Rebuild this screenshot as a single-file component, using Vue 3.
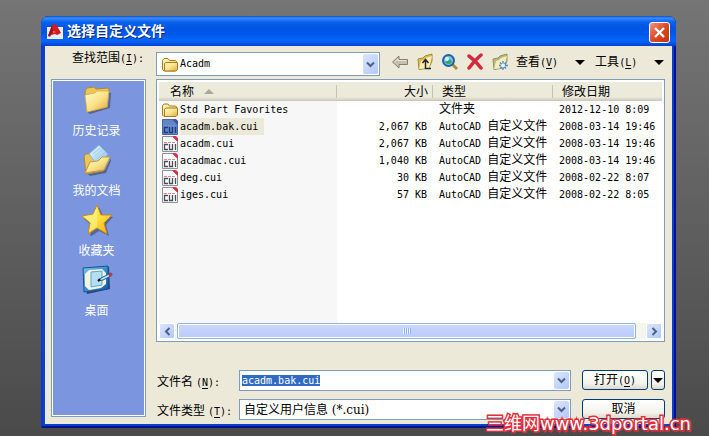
<script setup>
import { onMounted, ref } from 'vue'

const places = [
  { icon: 'history', label: '历史记录' },
  { icon: 'docs', label: '我的文档' },
  { icon: 'star', label: '收藏夹' },
  { icon: 'desktop', label: '桌面' },
]

const files = [
  { name: 'Std Part Favorites', folder: true, size: '', app: '', kind: '文件夹', date: '2012-12-10 8:09' },
  { name: 'acadm.bak.cui', selected: true, size: '2,067 KB', app: 'AutoCAD ', kind: '自定义文件', date: '2008-03-14 19:46' },
  { name: 'acadm.cui', size: '2,067 KB', app: 'AutoCAD ', kind: '自定义文件', date: '2008-03-14 19:46' },
  { name: 'acadmac.cui', size: '1,040 KB', app: 'AutoCAD ', kind: '自定义文件', date: '2008-03-14 19:46' },
  { name: 'deg.cui', size: '30 KB', app: 'AutoCAD ', kind: '自定义文件', date: '2008-02-22 8:07' },
  { name: 'iges.cui', size: '57 KB', app: 'AutoCAD ', kind: '自定义文件', date: '2008-02-22 8:05' },
]

const fileName = ref('acadm.bak.cui')
const nameInput = ref(null)

onMounted(() => {
  nameInput.value.focus()
  nameInput.value.select()
})
</script>

<template>
  <main class="desk">
    <svg class="defs" width="0" height="0" aria-hidden="true">
      <defs>
        <linearGradient id="gold" x1="0" y1="0" x2="1" y2="1">
          <stop offset="0" stop-color="#fffbd0" />
          <stop offset="0.5" stop-color="#fbe38a" />
          <stop offset="1" stop-color="#dda93a" />
        </linearGradient>
        <linearGradient id="sheet" x1="0" y1="0" x2="1" y2="1">
          <stop offset="0" stop-color="#f2fbff" />
          <stop offset="1" stop-color="#7fb8e8" />
        </linearGradient>
        <linearGradient id="blue" x1="0" y1="0" x2="1" y2="1">
          <stop offset="0" stop-color="#79c4f2" />
          <stop offset="1" stop-color="#0d57b0" />
        </linearGradient>
        <linearGradient id="starfill" x1="0" y1="0" x2="1" y2="1">
          <stop offset="0" stop-color="#fff9a0" />
          <stop offset="0.5" stop-color="#ffe03c" />
          <stop offset="1" stop-color="#f0a818" />
        </linearGradient>
      </defs>
    </svg>

    <section class="window">
      <header class="titlebar">
        <svg class="logo" width="16" height="16" viewBox="0 0 16 16" aria-hidden="true">
          <rect x="0" y="3" width="16" height="12" fill="#e9edf4" />
          <path d="M1 12L5 1l4-1 5 9-4 2-2-1-4 1-1 2z" fill="#d71920" />
          <path d="M5 1l1 5-2 5-3 1z" fill="#951018" />
          <path d="M6 7l3 1-3 1z" fill="#f07a7a" />
        </svg>
        <h1>选择自定义文件</h1>
        <button class="close" type="button" aria-label="关闭">
          <svg width="13" height="13" viewBox="0 0 13 13"><path d="M2 2l9 9M11 2l-9 9" stroke="#fff" stroke-width="2.4" /></svg>
        </button>
      </header>

      <div class="body">
        <div class="lookin">
          <label for="folder">查找范围<span class="lat">(<u>I</u>):</span></label>
          <div class="combo folder-combo">
            <svg class="combo-icon" width="16" height="15" viewBox="0 0 16 15" aria-hidden="true">
              <path d="M.5 12.500v-9l1.500-2h4l1.500 2h6l1 1v8l-1.500 1.500h-11z" fill="url(#gold)" stroke="#a87c1c" />
              <path d="M2.500 13.500v-7l1.500-1h11.500v7l-1.500 1.500h-11z" fill="url(#gold)" stroke="#a87c1c" />
            </svg>
            <select id="folder" class="lat"><option>Acadm</option></select>
            <span class="drop" aria-hidden="true"><svg width="9" height="7" viewBox="0 0 9 7"><path d="M1 1.500l3.500 3.500L8 1.500" fill="none" stroke="#4d6185" stroke-width="2" /></svg></span>
          </div>
          <nav class="tools">
            <button type="button" aria-label="后退">
              <svg width="18" height="18" viewBox="0 0 18 18"><path d="M1.500 9L8 3v3.500h8.500v5H8V15z" fill="#c4c1af" stroke="#85826f" /><path d="M3.500 9L7 6v1.500h8" fill="none" stroke="#e8e6dc" /></svg>
            </button>
            <button type="button" aria-label="向上一级">
              <svg width="18" height="18" viewBox="0 0 18 18">
                <path d="M2 6l5-1 2-2 7-2v7l-3 7-10 1.500z" fill="#d9bd58" stroke="#a08b3c" />
                <path d="M3 16L5 8l3-1 2-2 6-2-3 12z" fill="#fbeeb0" />
                <path d="M9.500 7v8.500H15M6.500 10l3-3.500 3 3.500" fill="none" stroke="#26262a" stroke-width="1.500" />
              </svg>
            </button>
            <button type="button" aria-label="搜索">
              <svg width="18" height="18" viewBox="0 0 18 18">
                <path d="M11 11l5 5" stroke="#a88d3c" stroke-width="3" />
                <circle cx="7.500" cy="7.500" r="5.500" fill="#74c3e4" stroke="#2360a8" stroke-width="2" />
                <path d="M4 9a4 4 0 0 0 7 0l-2-3z" fill="#3ba06b" /><circle cx="6" cy="6" r="2" fill="#d8f3fb" />
              </svg>
            </button>
            <button type="button" aria-label="删除">
              <svg width="18" height="18" viewBox="0 0 18 18"><path d="M3 3q7 5 12 12M15 2Q8 8 3 15" fill="none" stroke="#d22a3e" stroke-width="3.500" stroke-linecap="round" /></svg>
            </button>
            <button type="button" aria-label="新建文件夹">
              <svg width="18" height="18" viewBox="0 0 18 18">
                <path d="M2 6l5-1 2-2 7-2v7l-3 7-10 1.500z" fill="#b9b777" stroke="#8f945f" />
                <path d="M3 16L5 8l3-1 2-2 6-2-3 12z" fill="#f3edbd" />
                <path d="M12 8v9M8 12.500h9M9 9.500l6 6M15 9.500l-6 6" stroke="#4a8ac4" stroke-width="1.300" /><circle cx="12" cy="12.500" r="2" fill="#eefaff" />
              </svg>
            </button>
            <button class="menu" type="button"><span>查看<span class="lat">(<u>V</u>)</span></span><i class="tri"></i></button>
            <button class="menu" type="button"><span>工具<span class="lat">(<u>L</u>)</span></span><i class="tri"></i></button>
          </nav>
        </div>

        <div class="content">
          <aside class="places">
            <a v-for="p in places" :key="p.label" href="#">
              <svg width="32" height="32" viewBox="0 0 32 32" aria-hidden="true">
                <g v-if="p.icon === 'history'">
                  <path d="M6 28L27 23 28 8l2 1-1 15L9 30z" fill="#49527c" opacity=".75" />
                  <path d="M4 7l2-3 7-1 2 2 12-1 1 2-2 17-20 5z" fill="#e8c65c" stroke="#b48a2c" />
                  <path d="M4 11l10-2 2-2 12 0-2 16-20 5z" fill="url(#gold)" stroke="#d0a848" stroke-width=".7" />
                </g>
                <g v-else-if="p.icon === 'docs'">
                  <path d="M7 30l17-4 6-12v3l-5 12-16 3z" fill="#49527c" opacity=".75" />
                  <path d="M3 12l2-2 7-1 3 2 11 2-4 14-17 3z" fill="#eac65b" stroke="#b08a2e" />
                  <path d="M8 10L18 1l9 9-9 13z" fill="url(#sheet)" stroke="#84b6dc" />
                  <path d="M12 10l7-6M14 12l8-7M16 15l8-7M18 18l7-8" stroke="#9fcdf0" />
                  <path d="M4 29l5-11 8-1 4-4 8 0-6 13z" fill="url(#gold)" stroke="#c39a3c" />
                </g>
                <g v-else-if="p.icon === 'star'">
                  <path d="M18 3l4 9 10 1-7 8 3 11-10-5-9 6 2-11-8-7 11-2z" fill="#49527c" opacity=".7" />
                  <path d="M16 1l4 10 11 0-8 8 3 11-10-6-9 6 2-11-8-7 11-2z" fill="url(#starfill)" stroke="#c8881a" />
                  <path d="M16 3v20l-8 5 2-9-6-6 8-2z" fill="#fff5a0" opacity=".5" />
                </g>
                <g v-else>
                  <path d="M3 6l25-3 1 22-23 5z" fill="#294472" />
                  <path d="M2 4l25-2v23L3 28z" fill="url(#blue)" stroke="#175493" />
                  <path d="M8 6l13-1 4 4v11l-5 4-12 2-4-4V10z" fill="#f4f6dc" />
                  <path d="M10 8l11-1v14l-11 2z" fill="#b4def5" stroke="#5ba8d8" />
                  <path d="M17 17l3-3 8-4 2 2-8 4z" fill="#b9e0f4" stroke="#285b92" />
                  <circle cx="29.500" cy="10.500" r="2" fill="#a44058" /><path d="M17 17l2-2" stroke="#111" stroke-width="2" />
                </g>
              </svg>
              <span>{{ p.label }}</span>
            </a>
          </aside>

          <div class="right">
            <div class="list">
              <div class="pane">
                <table>
                  <colgroup><col class="c-name" /><col class="c-size" /><col class="c-type" /><col /></colgroup>
                  <thead>
                    <tr>
                      <th>名称<i class="sort"></i></th>
                      <th class="num">大小</th>
                      <th>类型</th>
                      <th>修改日期</th>
                    </tr>
                  </thead>
                  <tbody>
                    <tr v-for="f in files" :key="f.name">
                      <td class="name">
                        <div class="file" :class="{ selected: f.selected }">
                          <svg v-if="f.folder" width="16" height="16" viewBox="0 0 16 16" aria-hidden="true">
                            <path d="M.5 13v-9l1.500-2h4l1.500 2h6l1 1v8l-1.500 1.500h-11z" fill="url(#gold)" stroke="#a87c1c" />
                            <path d="M2.500 14v-7l1.500-1h11.500v7l-1.500 1.500h-11z" fill="url(#gold)" stroke="#a87c1c" />
                          </svg>
                          <svg v-else width="16" height="16" viewBox="0 0 16 16" aria-hidden="true">
                            <path class="page" d="M.5.5h10l5 5v10H.5z" />
                            <path class="fold" d="M10 0l6 6V2l-2-2z" />
                            <path class="rule" d="M2 6.500h12" />
                            <path class="cui" d="M6 8.500H2.500v5H6M7.500 8v5.500h3V8M13.500 8v6" />
                          </svg>
                          <span class="lat">{{ f.name }}</span>
                        </div>
                      </td>
                      <td class="num lat">{{ f.size }}</td>
                      <td><span class="lat">{{ f.app }}</span>{{ f.kind }}</td>
                      <td class="lat">{{ f.date }}</td>
                    </tr>
                  </tbody>
                </table>
              </div>
              <div class="scroll">
                <button type="button" aria-label="向左滚动"><svg width="7" height="9" viewBox="0 0 7 9"><path d="M5.500 1L2 4.500 5.500 8" fill="none" stroke="#4d6185" stroke-width="2" /></svg></button>
                <div class="track"><div class="thumb"><i></i></div></div>
                <button type="button" aria-label="向右滚动"><svg width="7" height="9" viewBox="0 0 7 9"><path d="M1.500 1L5 4.500 1.500 8" fill="none" stroke="#4d6185" stroke-width="2" /></svg></button>
              </div>
            </div>

            <form class="form" @submit.prevent>
              <label for="fname">文件名<span class="lat gap">(<u>N</u>):</span></label>
              <div class="combo">
                <input id="fname" ref="nameInput" v-model="fileName" class="lat" type="text" autocomplete="off" spellcheck="false" />
                <span class="drop" aria-hidden="true"><svg width="9" height="7" viewBox="0 0 9 7"><path d="M1 1.500l3.500 3.500L8 1.500" fill="none" stroke="#4d6185" stroke-width="2" /></svg></span>
              </div>
              <div class="actions">
                <button class="push" type="submit">打开<span class="lat">(<u>O</u>)</span></button>
                <button class="push more" type="button" aria-label="打开选项"><i class="tri"></i></button>
              </div>
              <label for="ftype">文件类型<span class="lat gap">(<u>T</u>):</span></label>
              <div class="combo">
                <select id="ftype"><option>自定义用户信息 (*.cui)</option></select>
                <span class="drop" aria-hidden="true"><svg width="9" height="7" viewBox="0 0 9 7"><path d="M1 1.500l3.500 3.500L8 1.500" fill="none" stroke="#4d6185" stroke-width="2" /></svg></span>
              </div>
              <div class="actions"><button class="push" type="button">取消</button></div>
            </form>
          </div>
        </div>
      </div>
    </section>
    <p class="watermark">三维网<span>www.3dportal.cn</span></p>
  </main>
</template>

<style>
body { margin: 0; }
</style>

<style scoped>
* { box-sizing: border-box; }
.desk {
  position: relative;
  min-height: 100vh;
  padding: 16px 33px 9px 41px;
  background: linear-gradient(#757575, #4a4a4a);
  font: 12px/16px "Liberation Serif", "Noto Sans CJK SC", serif;
  color: #000;
}
.defs { position: absolute; }
button, input, select { font: inherit; color: inherit; margin: 0; }
button { padding: 0; border: 0; background: none; }
.lat, input.lat, select.lat { font-family: "DejaVu Sans Mono", "Noto Sans CJK SC", monospace; font-size: 10px; white-space: pre; }
u { text-underline-offset: 2px; }

.window {
  border-radius: 8px 8px 0 0;
  background: #0a3fd0;
  padding: 0 4px 4px;
  box-shadow: inset 1px 0 #0831d9, inset -2px -2px #00138c;
}
.titlebar {
  display: flex;
  align-items: center;
  gap: 4px;
  height: 30px;
  margin: 0 -4px;
  padding: 2px 6px 0;
  border-radius: 8px 8px 0 0;
  background: linear-gradient(#0a4fc4 0, #3a8cfb 2px, #0a62ee 6px, #0054e3 12px, #0058ea 18px, #0666fb 25px, #0550dc 28px, #003dd7 30px);
}
h1 { flex: 1; margin: 0; font-size: 14px; line-height: 20px; font-weight: 700; color: #fff; text-shadow: 1px 1px #0a2a80; }
.close {
  display: grid;
  place-items: center;
  width: 21px;
  height: 21px;
  border: 1px solid #fff;
  border-radius: 3px;
  background: linear-gradient(135deg, #f0957b, #dc4a26 50%, #c23310);
}
.body { padding: 6px 7px 4px 6px; background: #ece9d8; }

.lookin { display: flex; align-items: center; height: 24px; }
.lookin label { flex: none; width: 105px; padding: 0 0 12px 21px; white-space: nowrap; }
.combo { position: relative; display: flex; align-items: center; background: #fff; border: 1px solid #7f9db9; }
.folder-combo { flex: none; width: 224px; height: 24px; padding-left: 5px; }
.combo input, .combo select { flex: 1; min-width: 0; height: 18px; padding: 0 0 0 2px; border: 0; outline: 0; background: none; appearance: none; }
.combo ::selection { background: #316ac5; color: #fff; }
.combo select:not(.lat) { font-family: "DejaVu Serif", "Noto Sans CJK SC", serif; padding-left: 4px; }
.drop {
  display: grid;
  place-items: center;
  align-self: stretch;
  width: 15px;
  margin: 1px;
  border-radius: 2px;
  background: linear-gradient(135deg, #dbe5ff, #b3c7f7);
  pointer-events: none;
}
.tools { display: flex; align-items: center; gap: 7px; flex: 1; padding: 0 0 4px 11px; }
.tools button { display: flex; flex: none; }
.tools .menu { align-items: center; gap: 17px; padding-right: 3px; white-space: nowrap; }
.tri { border: solid transparent; border-width: 5px 5px 0; border-top-color: #000; }

.content { display: flex; gap: 10px; padding-top: 3px; }
.places {
  display: flex;
  flex-direction: column;
  flex: 0 0 95px;
  margin-bottom: 3px;
  padding: 4px 4px 0 0;
  border: 1px solid #7f9db9;
  box-shadow: inset 0 0 0 1px #fff;
  background: #7b96df;
}
.places a { display: flex; flex-direction: column; align-items: center; gap: 7px; height: 60px; color: #fff; text-decoration: none; }
.places svg { flex: none; }

.right { flex: 1; min-width: 0; }
.list { padding: 2px; border: 1px solid #7f9db9; background: #fff; }
.pane { min-height: 241px; background: linear-gradient(90deg, #f7f7f7 178px, #fff 178px); }
table { width: 100%; table-layout: fixed; border-collapse: collapse; }
.c-name { width: 178px; }
.c-size { width: 96px; }
.c-type { width: 120px; }
th { height: 19px; padding: 0 9px; font-weight: 400; text-align: left; background: linear-gradient(#ebeadb 15px, #cbc7b8); }
th:not(:last-child) { background: linear-gradient(#c7c5b2, #c7c5b2) right 0 top 3px / 1px 13px no-repeat, linear-gradient(#ebeadb 15px, #cbc7b8); }
th:first-child { padding-left: 11px; }
.num { text-align: right; }
th.num { padding-right: 5px; }
.sort { display: inline-block; margin-left: 10px; border: solid transparent; border-width: 0 5px 5px; border-bottom-color: #aca899; vertical-align: 2px; }
td { height: 17px; padding: 0 6px; line-height: 17px; white-space: nowrap; }
td.lat { line-height: 17px; }
td.name { padding: 0 0 0 3px; }
.file { display: inline-flex; align-items: center; gap: 2px; height: 17px; vertical-align: top; }
.file .lat { padding-right: 6px; }
.file.selected .lat { background: #ece9d8; }
.page { fill: #fbfbfb; stroke: #8d9299; }
.fold { fill: #d73245; }
.rule { stroke: #dd8a92; stroke-dasharray: 3 1; }
.cui { fill: none; stroke: #4a4f57; stroke-width: 1.300; }
.selected .page { fill: #6285c8; stroke: #4467a8; }
.selected .fold { fill: #4a4f9d; }
.selected .rule { stroke: #8292d8; }
.selected .cui { stroke: #1f3c78; }

.scroll { display: flex; gap: 2px; height: 16px; background: #f5f5f0; }
.scroll button { display: grid; place-items: center; width: 16px; border: 1px solid #fff; border-radius: 2px; background: linear-gradient(135deg, #dbe5ff, #b3c7f7); }
.track { flex: 1; padding-right: 8px; }
.thumb { display: grid; place-items: center; height: 16px; border: 1px solid #98b1e4; border-radius: 2px; box-shadow: inset 0 0 0 1px #fff; background: linear-gradient(#cad8fd, #b9cbfa); }
.thumb i { width: 8px; height: 6px; background: repeating-linear-gradient(90deg, #eef4fe 0 1px, #8cb0f8 1px 2px); }

.form { display: grid; grid-template-columns: 72px 1fr 83px; column-gap: 11px; row-gap: 8px; padding-top: 28px; }
.form > label { padding: 4px 0 0 1px; white-space: nowrap; }
.form .combo { height: 21px; }
.gap { padding-left: 3px; }
.actions { display: flex; gap: 3px; height: 20px; }
.push { flex: 1; border: 1px solid #003c74; border-radius: 3px; background: linear-gradient(#fff, #f3f2ec 70%, #dcd8cb); }
.more { display: grid; place-items: center; flex: 0 0 14px; }
.watermark {
  position: absolute;
  right: 18px;
  bottom: 5px;
  margin: 0;
  font: 17px/16px "DejaVu Sans", "Noto Sans CJK SC", sans-serif;
  font-size: 18px;
  color: #fff;
  -webkit-text-stroke: 3px #e0303c;
  paint-order: stroke fill;
  white-space: nowrap;
}
</style>
